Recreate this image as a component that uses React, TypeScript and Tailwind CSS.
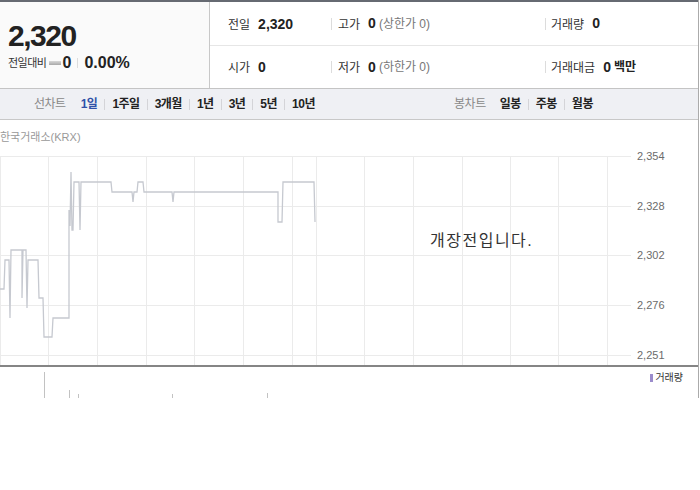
import React from 'react';

const pricePoints =
    '0,133 4,133 5,104 9,104 10,162 11,94 22,94 22,142 23,94 26,94 27,152 28,104 38,104 39,142 43,142 44,181 52,181 53,162 68,162 69,162 69,54 70,70 71,16 72,74 73,74 74,26 79,26 80,74 81,26 111,26 112,36 132,36 133,46 134,36 137,36 138,26 143,26 144,36 172,36 173,46 174,36 278,36 278,66 282,66 283,26 314,26 315,66';

const vLines = [0.5, 48.5, 97.5, 146.5, 194.5, 243.5, 292.5, 316.5, 364.5, 413.5, 462.5, 510.5, 558.5, 607.5];
const hLines = [
    { y: 0.5, label: '2,354', ly: 1 },
    { y: 50.5, label: '2,328', ly: 51 },
    { y: 99.5, label: '2,302', ly: 100 },
    { y: 149.5, label: '2,276', ly: 150 },
    { y: 199.5, label: '2,251', ly: 200 },
];

const volumeBars = [
    { x: 44.5, top: 5 },
    { x: 69.5, top: 23 },
    { x: 78.5, top: 27 },
    { x: 172.5, top: 27 },
    { x: 267.5, top: 26 },
];

const Sep = () => <span className="inline-block w-px h-[12px] bg-[#dcdcdc]" />;

const Label = ({ children }: { children: React.ReactNode }) => (
    <span className="text-[12px] text-[#333]">{children}</span>
);

const Value = ({ children }: { children: React.ReactNode }) => (
    <span className="text-[14px] font-bold text-[#222] ml-[8px]">{children}</span>
);

const Note = ({ children }: { children: React.ReactNode }) => (
    <span className="text-[12px] text-[#777] ml-[3px]">{children}</span>
);

const lineTabs = ['1일', '1주일', '3개월', '1년', '3년', '5년', '10년'];
const candleTabs = ['일봉', '주봉', '월봉'];

const App: React.FC = () => {
    return (
        <div className="w-[699px] bg-white border-r border-[#ababab] [font-family:'Liberation_Sans','Noto_Sans_CJK_KR',sans-serif]">
            {/* summary */}
            <div className="flex h-[89px] border-t-2 border-b border-t-[#666a72] border-b-[#c4c4c4]">
                <div className="w-[210px] bg-[#fafafa] border-r border-[#c8c8c8] pl-[8px] pt-[19px]">
                    <div className="text-[30px] leading-[30px] font-bold tracking-[-1.5px] text-[#222]">2,320</div>
                    <div className="flex items-center mt-[2px] h-[20px]">
                        <span className="text-[11px] text-[#333] tracking-[-0.5px]">전일대비</span>
                        <span className="inline-block w-[12px] h-[4px] ml-[3px] bg-gradient-to-b from-[#d8d8d8] to-[#a8a8a8]" />
                        <span className="text-[16px] font-bold text-[#222] ml-[1px]">0</span>
                        <span className="inline-block w-px h-[10px] bg-[#dcdcdc] mx-[6px]" />
                        <span className="text-[16px] font-bold text-[#222]">0.00%</span>
                    </div>
                </div>
                <div className="flex-1 flex flex-col">
                    <div className="flex items-center h-[44px] border-b border-[#e6e6e6]">
                        <div className="w-[121px] pl-[18px]">
                            <Label>전일</Label>
                            <Value>2,320</Value>
                        </div>
                        <div className="w-[214px] flex items-center">
                            <Sep />
                            <span className="ml-[6px]"><Label>고가</Label></span>
                            <Value>0</Value>
                            <Note>(상한가 0)</Note>
                        </div>
                        <div className="flex items-center">
                            <Sep />
                            <span className="ml-[5px]"><Label>거래량</Label></span>
                            <Value>0</Value>
                        </div>
                    </div>
                    <div className="flex items-center flex-1">
                        <div className="w-[121px] pl-[18px]">
                            <Label>시가</Label>
                            <Value>0</Value>
                        </div>
                        <div className="w-[214px] flex items-center">
                            <Sep />
                            <span className="ml-[6px]"><Label>저가</Label></span>
                            <Value>0</Value>
                            <Note>(하한가 0)</Note>
                        </div>
                        <div className="flex items-center">
                            <Sep />
                            <span className="ml-[5px]"><Label>거래대금</Label></span>
                            <Value>0</Value>
                            <span className="text-[12px] font-bold text-[#222] ml-[3px]">백만</span>
                        </div>
                    </div>
                </div>
            </div>

            {/* chart type tabs */}
            <div className="flex h-[31px] bg-[#eff0f4] border-b border-[#c8c8c8]">
                <div className="flex-1 flex items-center justify-center">
                    <span className="text-[12px] text-[#888] mr-[15px] tracking-[-0.5px]">선차트</span>
                    {lineTabs.map((t, i) => (
                        <React.Fragment key={t}>
                            {i > 0 && <span className="inline-block w-px h-[11px] bg-[#d4d4d8] mx-[7px]" />}
                            <span className={`text-[12px] font-bold tracking-[-0.5px] ${i === 0 ? 'text-[#2f50a8]' : 'text-[#222]'}`}>{t}</span>
                        </React.Fragment>
                    ))}
                </div>
                <div className="flex-1 flex items-center justify-center">
                    <span className="text-[12px] text-[#888] mr-[14px] tracking-[-0.5px]">봉차트</span>
                    {candleTabs.map((t, i) => (
                        <React.Fragment key={t}>
                            {i > 0 && <span className="inline-block w-px h-[11px] bg-[#d4d4d8] mx-[7px]" />}
                            <span className="text-[12px] font-bold text-[#222] tracking-[-0.5px]">{t}</span>
                        </React.Fragment>
                    ))}
                </div>
            </div>

            {/* price chart */}
            <div className="relative">
                <div className="h-[36px] pt-[10px] text-[11px] leading-[14px] text-[#999]">한국거래소(KRX)</div>
                <svg width="698" height="209" className="block overflow-visible">
                    {hLines.map(l => (
                        <line key={l.y} x1="0" x2="631" y1={l.y} y2={l.y} stroke="#ebebeb" strokeWidth="1" />
                    ))}
                    {vLines.map(x => (
                        <line key={x} x1={x} x2={x} y1="0" y2="209" stroke="#ebebeb" strokeWidth="1" />
                    ))}
                    <polyline points={pricePoints} fill="none" stroke="#c6c9d0" strokeWidth="1.3" />
                    {hLines.map(l => (
                        <text key={l.label} x="637" y={l.ly} dominantBaseline="middle" fontSize="11" fill="#6b6b6b" fontFamily="Liberation Sans, sans-serif">
                            {l.label}
                        </text>
                    ))}
                </svg>
                <div className="absolute left-[430px] top-[109px] text-[16px] tracking-[1.5px] text-[#333]">개장전입니다.</div>
            </div>

            {/* volume */}
            <div className="relative h-[33px] border-t-2 border-[#858585]">
                <svg width="640" height="31" className="block">
                    {volumeBars.map(b => (
                        <line key={b.x} x1={b.x} x2={b.x} y1={b.top} y2="31" stroke="#c2c2c2" strokeWidth="1" />
                    ))}
                </svg>
                <div className="absolute right-[15px] top-[5px] flex items-center">
                    <span className="inline-block w-[3px] h-[8px] bg-[#9b8ccc] mr-[2px]" />
                    <span className="text-[10px] leading-[12px] text-[#333]">거래량</span>
                </div>
            </div>
        </div>
    );
};

export default App;
